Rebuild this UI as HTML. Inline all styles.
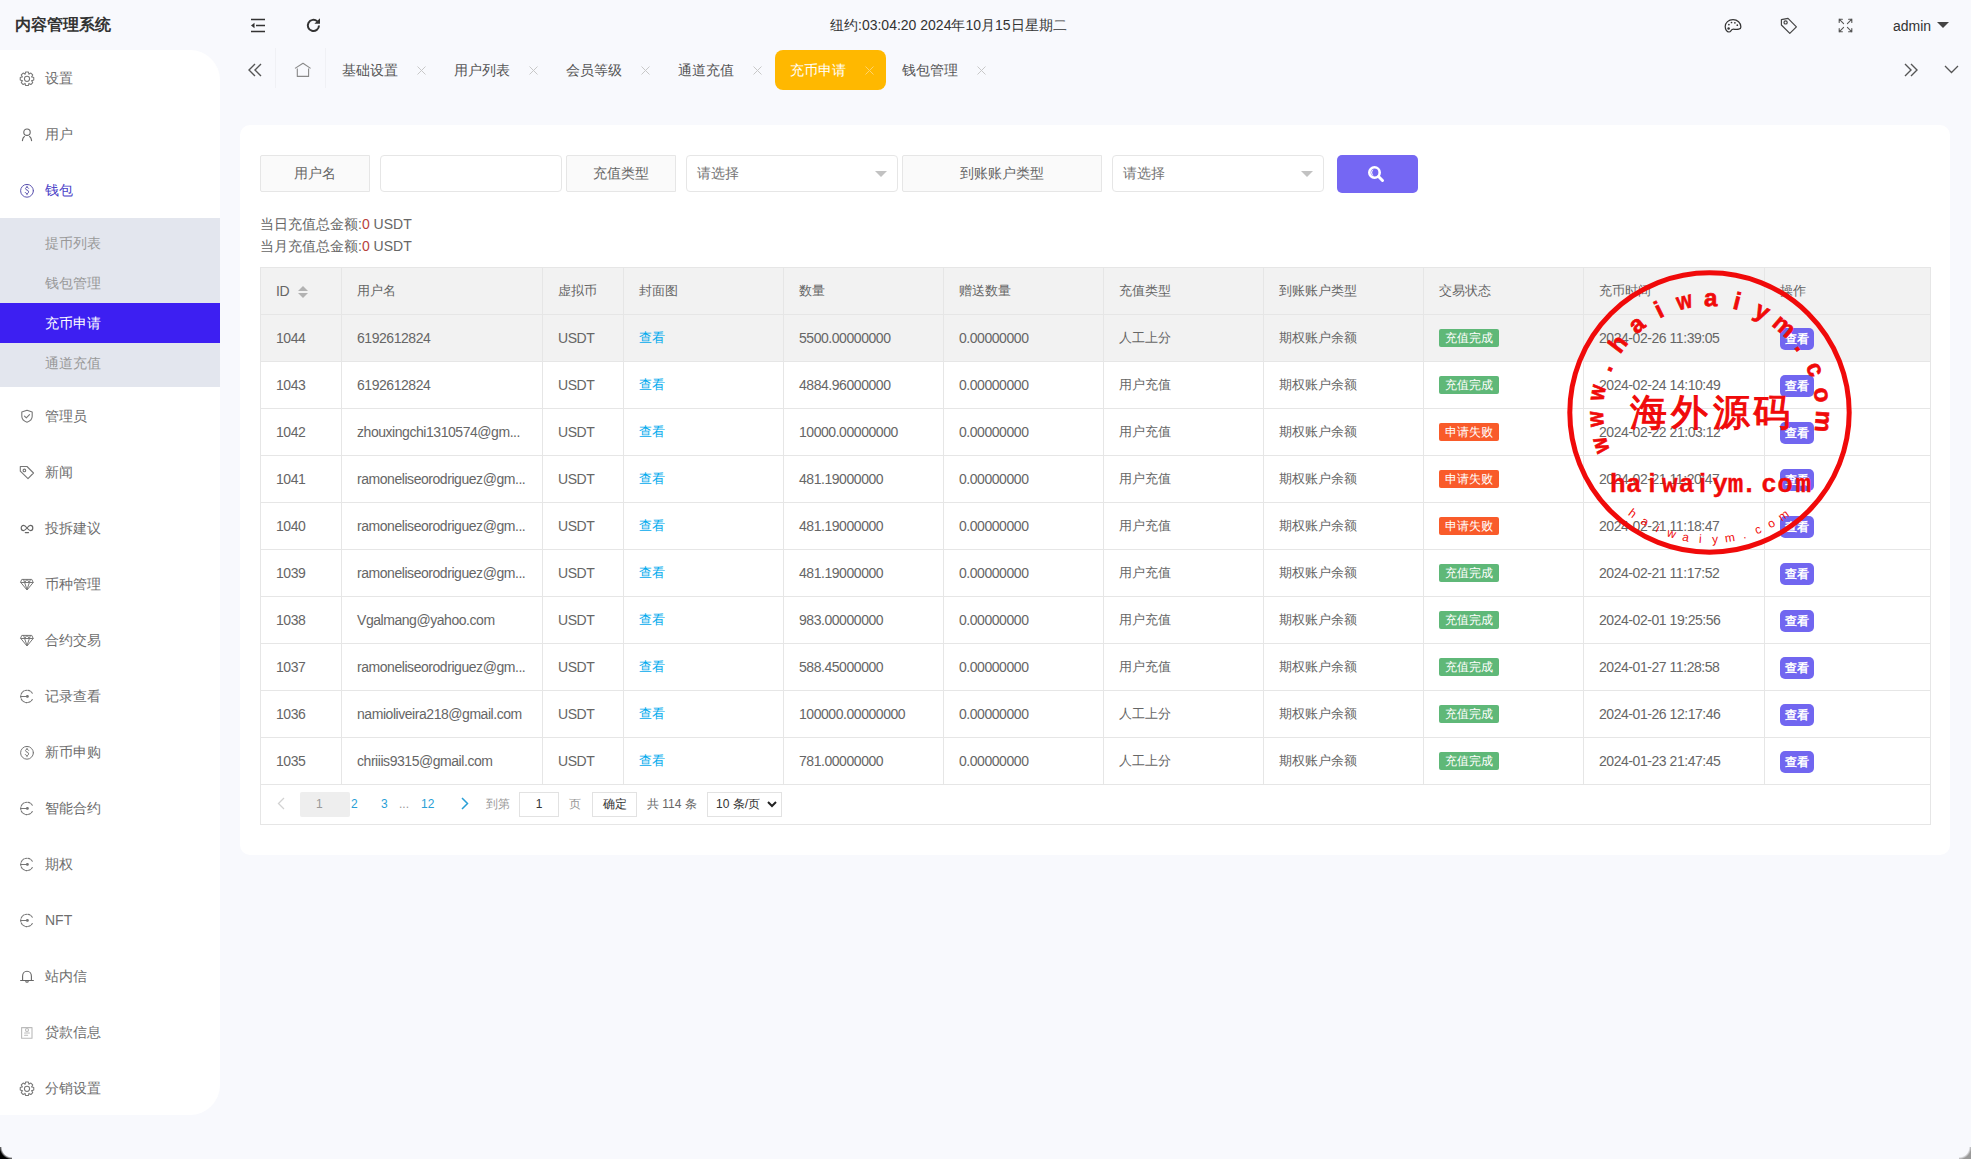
<!DOCTYPE html><html><head><meta charset="utf-8"><style>
*{box-sizing:border-box;margin:0;padding:0}
html,body{width:1971px;height:1159px;overflow:hidden}
body{background:#f8f9fd;font-family:"Liberation Sans",sans-serif;font-size:14px;color:#666;position:relative}
.abs{position:absolute}
.title{left:15px;top:13px;font-size:16px;font-weight:bold;color:#333;line-height:24px;letter-spacing:0px}
.side{left:0;top:50px;width:220px;height:1065px;background:#fff;border-radius:0 30px 30px 0}
.mi{position:absolute;left:0;width:220px;height:40px;line-height:40px}

.mi span{position:absolute;left:45px;top:0}
.sub{left:0;top:218px;width:220px;height:169px;background:#e3e6ee}
.si{position:absolute;left:0;width:220px;height:40px;line-height:40px;color:#999}
.si span{position:absolute;left:45px}
.si.act{background:#3d1ff2;color:#fff}
.tab{position:absolute;top:50px;height:40px;line-height:40px;color:#555}
.tab .x{position:absolute;top:0;color:#c2c2c2;font-size:14px}
.card{left:240px;top:125px;width:1710px;height:730px;background:#fff;border-radius:10px}
.lab{position:absolute;top:155px;height:37px;line-height:35px;background:#fafafa;border:1px solid #e6e6e6;text-align:center;color:#666;border-radius:2px 0 0 2px}
.inp{position:absolute;top:155px;height:37px;line-height:35px;background:#fff;border:1px solid #e6e6e6;border-radius:4px;color:#757575;padding-left:10px}
.tri{position:absolute;width:0;height:0;border-left:6px solid transparent;border-right:6px solid transparent;border-top:6px solid #c2c2c2}
table{border-collapse:collapse;table-layout:fixed;width:1671px}
.tbl{position:absolute;left:260px;top:267px}
td,th{border:1px solid #e6e6e6;height:47px;padding:0 15px;font-weight:normal;text-align:left;white-space:nowrap;overflow:hidden;color:#666;font-size:13px}
.n{font-size:14px;letter-spacing:-0.45px}
th{background:#f2f2f2}
tr.hov td{background:#f2f2f2}
.lnk{color:#01aaed}
.bdg{letter-spacing:0;display:inline-block;width:60px;height:18px;line-height:18px;font-size:12px;color:#fff;text-align:center;border-radius:2px;vertical-align:middle}
.ok{background:#5fb878}
.fail{background:#f95b2a}
.vbtn{letter-spacing:0;display:inline-block;width:34px;height:22px;line-height:22px;font-size:12px;font-weight:bold;color:#fff;text-align:center;border-radius:5px;background:#7166f0;vertical-align:middle;position:relative;top:1px;margin-left:0}
</style></head><body>

<div class="abs title">内容管理系统</div>
<svg class="abs" style="left:250px;top:18px" width="16" height="15" viewBox="0 0 16 15"><path fill="none" stroke="#333" stroke-width="1.6" d="M1 1.5h14M6 7.5h9M1 13.5h14"/><path fill="#333" d="M4.5 4.8L1 7.5l3.5 2.7z"/></svg>
<svg class="abs" style="left:305px;top:17px" width="17" height="17" viewBox="0 0 17 17"><path fill="none" stroke="#333" stroke-width="2" d="M14 8.5A5.6 5.6 0 1 1 12.3 4.4"/><path fill="#333" d="M15 1.2v5.6h-5.6z"/></svg>
<div class="abs" style="left:830px;top:15px;line-height:20px;color:#333;font-size:14px">纽约:03:04:20 2024年10月15日星期二</div>
<svg class="abs" style="left:1724px;top:18px" width="18" height="16" viewBox="0 0 18 16"><path fill="none" stroke="#333" stroke-width="1.2" stroke-linejoin="round" d="M9 1.6C4.6 1.6 1.2 4.6 1.2 8.6c0 2.9 1.7 5.4 3.8 5.4 1.7 0 2-1.8 3.1-2.5 1.3-0.8 3.7 0.3 6.6-0.3 1.4-0.3 2.2-1 2.2-2.3C16.9 4.8 13.4 1.6 9 1.6z"/><circle fill="#333" cx="4.6" cy="10.6" r="1.25"/><circle fill="#333" cx="4.9" cy="6.6" r="0.85"/><circle fill="#333" cx="7.5" cy="4.5" r="0.85"/><circle fill="#333" cx="10.9" cy="4.8" r="0.85"/><circle fill="#333" cx="13.3" cy="7.2" r="0.85"/></svg>
<svg class="abs" style="left:1780px;top:17px" width="18" height="18" viewBox="0 0 18 18"><path fill="none" stroke="#444" stroke-width="1.2" stroke-linejoin="round" d="M1.4 2.6L8 1.4l8.4 8.4-6.6 6.6L1.4 8z"/><circle fill="none" stroke="#444" stroke-width="1.2" cx="5.6" cy="5.4" r="1.6"/></svg>
<svg class="abs" style="left:1838px;top:18px" width="15" height="15" viewBox="0 0 15 15"><g fill="none" stroke="#555" stroke-width="1.1" stroke-linecap="round"><path d="M5.6 5.6L1.2 1.2M1.2 4.4V1.2h3.2M9.4 5.6l4.4-4.4M10.6 1.2h3.2v3.2M5.6 9.4L1.2 13.8M1.2 10.6v3.2h3.2M9.4 9.4l4.4 4.4M13.8 10.6v3.2h-3.2"/></g></svg>
<div class="abs" style="left:1893px;top:16px;line-height:20px;color:#333;font-size:14px">admin</div>
<div class="tri abs" style="left:1937px;top:22px;border-top-color:#444;border-left-width:6px;border-right-width:6px;border-top-width:6px"></div>
<div class="abs side"></div>
<div class="mi" style="top:58px;color:#6e6e6e"><svg width="16" height="16" viewBox="0 0 16 16" style="position:absolute;left:19px;top:12px"><g fill="none" stroke="#777" stroke-width="1.05" stroke-linecap="round" stroke-linejoin="round"><path d="M5.97 4.23 L6.68 2.03 L9.32 2.03 L10.03 4.23 L9.79 4.13 L11.86 3.08 L13.72 4.94 L12.67 7.01 L12.57 6.77 L14.77 7.48 L14.77 10.12 L12.57 10.83 L12.67 10.59 L13.72 12.66 L11.86 14.52 L9.79 13.47 L10.03 13.37 L9.32 15.57 L6.68 15.57 L5.97 13.37 L6.21 13.47 L4.14 14.52 L2.28 12.66 L3.33 10.59 L3.43 10.83 L1.23 10.12 L1.23 7.48 L3.43 6.77 L3.33 7.01 L2.28 4.94 L4.14 3.08 L6.21 4.13Z"/><circle cx="8" cy="8.8" r="2.6"/></g></svg><span>设置</span></div>
<div class="mi" style="top:114px;color:#6e6e6e"><svg width="16" height="16" viewBox="0 0 16 16" style="position:absolute;left:19px;top:12px"><g fill="none" stroke="#666" stroke-width="1.1" stroke-linecap="round" stroke-linejoin="round"><circle cx="8" cy="6.2" r="3.2"/><path d="M3.4 14.6C3.6 12.6 4.3 11.2 5.4 10.5M10.6 10.5C11.7 11.2 12.4 12.6 12.6 14.6"/></g></svg><span>用户</span></div>
<div class="mi" style="top:170px;color:#4b3fc8"><svg width="16" height="16" viewBox="0 0 16 16" style="position:absolute;left:19px;top:12px"><g fill="none" stroke="#5d55b0" stroke-width="1.0" stroke-linecap="round" stroke-linejoin="round"><circle cx="8" cy="8.8" r="6.4"/><path d="M9.6 6.3C9.3 5.6 8.8 5.3 8 5.3 7 5.3 6.5 5.9 6.5 6.6 6.5 8.4 9.6 7.6 9.6 9.9 9.6 10.8 8.9 11.5 8 11.5 7.1 11.5 6.6 11.1 6.3 10.4M8 4.2v1.1M8 11.5v1.2"/></g></svg><span>钱包</span></div>
<div class="mi" style="top:396px;color:#6e6e6e"><svg width="16" height="16" viewBox="0 0 16 16" style="position:absolute;left:19px;top:12px"><g fill="none" stroke="#777" stroke-width="1.1" stroke-linecap="round" stroke-linejoin="round"><path d="M8 2.2l5.2 1.9v4.2c0 3-2.3 5-5.2 5.9-2.9-0.9-5.2-2.9-5.2-5.9V4.1z"/><path d="M5.5 8.2l1.8 1.7 3.2-3.2"/></g></svg><span>管理员</span></div>
<div class="mi" style="top:452px;color:#6e6e6e"><svg width="16" height="16" viewBox="0 0 16 16" style="position:absolute;left:19px;top:12px"><g fill="none" stroke="#777" stroke-width="1.1" stroke-linecap="round" stroke-linejoin="round"><path d="M1.3 2.5H8L14.5 9 9 14.6 1.3 7.2Z"/><circle cx="5.4" cy="6.4" r="1.3"/></g></svg><span>新闻</span></div>
<div class="mi" style="top:508px;color:#6e6e6e"><svg width="16" height="16" viewBox="0 0 16 16" style="position:absolute;left:19px;top:12px"><g fill="none" stroke="#666" stroke-width="1.2" stroke-linecap="round" stroke-linejoin="round"><path d="M8 8C6.8 6.5 5.8 5.4 4.6 5.4 3.2 5.4 2.2 6.6 2.2 8S3.2 10.6 4.6 10.6C5.8 10.6 6.8 9.5 8 8S10.2 5.4 11.4 5.4C12.8 5.4 13.8 6.6 13.8 8S12.8 10.6 11.4 10.6C10.2 10.6 9.2 9.5 8 8Z"/><path d="M6.3 12.6h3.2"/></g></svg><span>投拆建议</span></div>
<div class="mi" style="top:564px;color:#6e6e6e"><svg width="16" height="16" viewBox="0 0 16 16" style="position:absolute;left:19px;top:12px"><g fill="none" stroke="#777" stroke-width="1.0" stroke-linecap="round" stroke-linejoin="round"><path d="M3.2 3.4h9.6L14.2 6.5 8 14 1.8 6.5Z"/><path d="M2 6.5h12M4.6 3.4l1 3.1L8 13.6 10.4 6.5l1-3.1M5.6 6.5L8 3.4l2.4 3.1"/></g></svg><span>币种管理</span></div>
<div class="mi" style="top:620px;color:#6e6e6e"><svg width="16" height="16" viewBox="0 0 16 16" style="position:absolute;left:19px;top:12px"><g fill="none" stroke="#777" stroke-width="1.0" stroke-linecap="round" stroke-linejoin="round"><path d="M3.2 3.4h9.6L14.2 6.5 8 14 1.8 6.5Z"/><path d="M2 6.5h12M4.6 3.4l1 3.1L8 13.6 10.4 6.5l1-3.1M5.6 6.5L8 3.4l2.4 3.1"/></g></svg><span>合约交易</span></div>
<div class="mi" style="top:676px;color:#6e6e6e"><svg width="16" height="16" viewBox="0 0 16 16" style="position:absolute;left:19px;top:12px"><g fill="none" stroke="#777" stroke-width="1.05" stroke-linecap="round" stroke-linejoin="round"><path stroke-dasharray="1.9 1.1" d="M13.3 5.3A6.2 6.2 0 1 0 13.3 11.5"/><path d="M1.6 8.4h6.4"/><circle cx="8.4" cy="8.4" r="0.9" fill="#777"/></g></svg><span>记录查看</span></div>
<div class="mi" style="top:732px;color:#6e6e6e"><svg width="16" height="16" viewBox="0 0 16 16" style="position:absolute;left:19px;top:12px"><g fill="none" stroke="#777" stroke-width="1.0" stroke-linecap="round" stroke-linejoin="round"><circle cx="8" cy="8.8" r="6.4"/><path d="M9.6 6.3C9.3 5.6 8.8 5.3 8 5.3 7 5.3 6.5 5.9 6.5 6.6 6.5 8.4 9.6 7.6 9.6 9.9 9.6 10.8 8.9 11.5 8 11.5 7.1 11.5 6.6 11.1 6.3 10.4M8 4.2v1.1M8 11.5v1.2"/></g></svg><span>新币申购</span></div>
<div class="mi" style="top:788px;color:#6e6e6e"><svg width="16" height="16" viewBox="0 0 16 16" style="position:absolute;left:19px;top:12px"><g fill="none" stroke="#777" stroke-width="1.05" stroke-linecap="round" stroke-linejoin="round"><path stroke-dasharray="1.9 1.1" d="M13.3 5.3A6.2 6.2 0 1 0 13.3 11.5"/><path d="M1.6 8.4h6.4"/><circle cx="8.4" cy="8.4" r="0.9" fill="#777"/></g></svg><span>智能合约</span></div>
<div class="mi" style="top:844px;color:#6e6e6e"><svg width="16" height="16" viewBox="0 0 16 16" style="position:absolute;left:19px;top:12px"><g fill="none" stroke="#777" stroke-width="1.05" stroke-linecap="round" stroke-linejoin="round"><path stroke-dasharray="1.9 1.1" d="M13.3 5.3A6.2 6.2 0 1 0 13.3 11.5"/><path d="M1.6 8.4h6.4"/><circle cx="8.4" cy="8.4" r="0.9" fill="#777"/></g></svg><span>期权</span></div>
<div class="mi" style="top:900px;color:#6e6e6e"><svg width="16" height="16" viewBox="0 0 16 16" style="position:absolute;left:19px;top:12px"><g fill="none" stroke="#777" stroke-width="1.05" stroke-linecap="round" stroke-linejoin="round"><path stroke-dasharray="1.9 1.1" d="M13.3 5.3A6.2 6.2 0 1 0 13.3 11.5"/><path d="M1.6 8.4h6.4"/><circle cx="8.4" cy="8.4" r="0.9" fill="#777"/></g></svg><span>NFT</span></div>
<div class="mi" style="top:956px;color:#6e6e6e"><svg width="16" height="16" viewBox="0 0 16 16" style="position:absolute;left:19px;top:12px"><g fill="none" stroke="#666" stroke-width="1.1" stroke-linecap="round" stroke-linejoin="round"><path d="M3.6 12.5V8.2C3.6 5.3 5.5 3.2 8 3.2S12.4 5.3 12.4 8.2V12.5M1.6 12.5H14.4M6.8 12.6v0.6a1.2 1 0 0 0 2.4 0v-0.6"/></g></svg><span>站内信</span></div>
<div class="mi" style="top:1012px;color:#6e6e6e"><svg width="16" height="16" viewBox="0 0 16 16" style="position:absolute;left:19px;top:12px"><g fill="none" stroke="#bbb" stroke-width="1.1" stroke-linecap="round" stroke-linejoin="round"><path d="M2.6 3.6h10.4v10.6H2.6z"/><circle cx="8" cy="6" r="1.5"/><path d="M5.6 9h4.8M5.6 11.3h3"/></g></svg><span>贷款信息</span></div>
<div class="mi" style="top:1068px;color:#6e6e6e"><svg width="16" height="16" viewBox="0 0 16 16" style="position:absolute;left:19px;top:12px"><g fill="none" stroke="#777" stroke-width="1.05" stroke-linecap="round" stroke-linejoin="round"><path d="M5.97 4.23 L6.68 2.03 L9.32 2.03 L10.03 4.23 L9.79 4.13 L11.86 3.08 L13.72 4.94 L12.67 7.01 L12.57 6.77 L14.77 7.48 L14.77 10.12 L12.57 10.83 L12.67 10.59 L13.72 12.66 L11.86 14.52 L9.79 13.47 L10.03 13.37 L9.32 15.57 L6.68 15.57 L5.97 13.37 L6.21 13.47 L4.14 14.52 L2.28 12.66 L3.33 10.59 L3.43 10.83 L1.23 10.12 L1.23 7.48 L3.43 6.77 L3.33 7.01 L2.28 4.94 L4.14 3.08 L6.21 4.13Z"/><circle cx="8" cy="8.8" r="2.6"/></g></svg><span>分销设置</span></div>
<div class="abs sub">
<div class="si" style="top:5px"><span>提币列表</span></div>
<div class="si" style="top:45px"><span>钱包管理</span></div>
<div class="si act" style="top:85px"><span>充币申请</span></div>
<div class="si" style="top:125px"><span>通道充值</span></div>
</div>
<svg class="abs" style="left:248px;top:63px" width="14" height="14" viewBox="0 0 14 14"><path fill="none" stroke="#555" stroke-width="1.4" d="M7 1L1 7l6 6M13 1L7 7l6 6"/></svg>
<svg class="abs" style="left:294px;top:62px" width="18" height="16" viewBox="0 0 18 16"><path fill="none" stroke="#888" stroke-width="1.1" stroke-linejoin="round" d="M1 6.4L9 1.3 16.6 6.4M3.3 6.4V14.4H14.6V6.4"/></svg>
<div class="abs" style="left:275px;top:48px;width:1px;height:40px;background:#f0f1f5"></div>
<div class="abs" style="left:325px;top:48px;width:1px;height:40px;background:#f0f1f5"></div>
<div class="abs" style="left:775px;top:50px;width:111px;height:40px;background:#ffb800;border-radius:8px"></div>
<div class="tab" style="left:342px;">基础设置</div>
<svg class="abs" style="left:417px;top:66px" width="9" height="9" viewBox="0 0 9 9"><path fill="none" stroke="#c8c8c8" stroke-width="1" d="M0.5 0.5l8 8M8.5 0.5l-8 8"/></svg>
<div class="tab" style="left:454px;">用户列表</div>
<svg class="abs" style="left:529px;top:66px" width="9" height="9" viewBox="0 0 9 9"><path fill="none" stroke="#c8c8c8" stroke-width="1" d="M0.5 0.5l8 8M8.5 0.5l-8 8"/></svg>
<div class="tab" style="left:566px;">会员等级</div>
<svg class="abs" style="left:641px;top:66px" width="9" height="9" viewBox="0 0 9 9"><path fill="none" stroke="#c8c8c8" stroke-width="1" d="M0.5 0.5l8 8M8.5 0.5l-8 8"/></svg>
<div class="tab" style="left:678px;">通道充值</div>
<svg class="abs" style="left:753px;top:66px" width="9" height="9" viewBox="0 0 9 9"><path fill="none" stroke="#c8c8c8" stroke-width="1" d="M0.5 0.5l8 8M8.5 0.5l-8 8"/></svg>
<div class="tab" style="left:790px;color:#fff">充币申请</div>
<svg class="abs" style="left:865px;top:66px" width="9" height="9" viewBox="0 0 9 9"><path fill="none" stroke="#ffd36b" stroke-width="1" d="M0.5 0.5l8 8M8.5 0.5l-8 8"/></svg>
<div class="tab" style="left:902px;">钱包管理</div>
<svg class="abs" style="left:977px;top:66px" width="9" height="9" viewBox="0 0 9 9"><path fill="none" stroke="#c8c8c8" stroke-width="1" d="M0.5 0.5l8 8M8.5 0.5l-8 8"/></svg>
<svg class="abs" style="left:1904px;top:63px" width="14" height="14" viewBox="0 0 14 14"><path fill="none" stroke="#555" stroke-width="1.4" d="M1 1l6 6-6 6M7 1l6 6-6 6"/></svg>
<svg class="abs" style="left:1944px;top:65px" width="15" height="9" viewBox="0 0 15 9"><path fill="none" stroke="#555" stroke-width="1.3" d="M1 1l6.5 6.5L14 1"/></svg>
<div class="abs card"></div>
<div class="lab" style="left:260px;width:110px">用户名</div>
<div class="inp" style="left:380px;width:182px"></div>
<div class="lab" style="left:566px;width:110px">充值类型</div>
<div class="inp" style="left:686px;width:212px">请选择</div><div class="tri" style="left:875px;top:171px"></div>
<div class="lab" style="left:902px;width:200px">到账账户类型</div>
<div class="inp" style="left:1112px;width:212px">请选择</div><div class="tri" style="left:1301px;top:171px"></div>
<div class="abs" style="left:1337px;top:155px;width:81px;height:38px;background:#7567f3;border-radius:5px"></div>
<svg class="abs" style="left:1367px;top:165px" width="18" height="18" viewBox="0 0 18 18"><circle fill="none" stroke="#fff" stroke-width="2.6" cx="7.5" cy="7.5" r="5.2"/><path stroke="#fff" stroke-width="3" stroke-linecap="round" d="M11.5 11.5l4 4"/><path fill="#fff" d="M6.6 4.2A3.4 3.4 0 0 0 6.6 10.8 5 5 0 0 1 6.6 4.2z"/></svg>
<div class="abs" style="left:260px;top:214px;line-height:20px;font-size:14px;color:#666">当日充值总金额:<span style="color:#b8423c">0</span> USDT</div>
<div class="abs" style="left:260px;top:236px;line-height:20px;font-size:14px;color:#666">当月充值总金额:<span style="color:#b8423c">0</span> USDT</div>
<table class="tbl"><colgroup>
<col style="width:81px">
<col style="width:201px">
<col style="width:81px">
<col style="width:160px">
<col style="width:160px">
<col style="width:160px">
<col style="width:160px">
<col style="width:160px">
<col style="width:160px">
<col style="width:181px">
<col style="width:166px">
</colgroup><tr>
<th class="n">ID <span style="display:inline-block;position:relative;width:10px;height:12px;vertical-align:middle;margin-left:5px"><i style="position:absolute;left:0;top:0;border:5px solid transparent;border-bottom-color:#b2b2b2;border-top-width:0"></i><i style="position:absolute;left:0;top:7px;border:5px solid transparent;border-top-color:#b2b2b2;border-bottom-width:0"></i></span></th>
<th>用户名</th>
<th>虚拟币</th>
<th>封面图</th>
<th>数量</th>
<th>赠送数量</th>
<th>充值类型</th>
<th>到账账户类型</th>
<th>交易状态</th>
<th>充币时间</th>
<th>操作</th>
</tr>
<tr class="hov"><td class="n">1044</td><td class="n">6192612824</td><td class="n">USDT</td><td><span class="lnk">查看</span></td><td class="n">5500.00000000</td><td class="n">0.00000000</td><td>人工上分</td><td>期权账户余额</td><td><span class="bdg ok">充值完成</span></td><td class="n">2024-02-26 11:39:05</td><td><span class="vbtn">查看</span></td></tr>
<tr><td class="n">1043</td><td class="n">6192612824</td><td class="n">USDT</td><td><span class="lnk">查看</span></td><td class="n">4884.96000000</td><td class="n">0.00000000</td><td>用户充值</td><td>期权账户余额</td><td><span class="bdg ok">充值完成</span></td><td class="n">2024-02-24 14:10:49</td><td><span class="vbtn">查看</span></td></tr>
<tr><td class="n">1042</td><td class="n">zhouxingchi1310574@gm...</td><td class="n">USDT</td><td><span class="lnk">查看</span></td><td class="n">10000.00000000</td><td class="n">0.00000000</td><td>用户充值</td><td>期权账户余额</td><td><span class="bdg fail">申请失败</span></td><td class="n">2024-02-22 21:03:12</td><td><span class="vbtn">查看</span></td></tr>
<tr><td class="n">1041</td><td class="n">ramoneliseorodriguez@gm...</td><td class="n">USDT</td><td><span class="lnk">查看</span></td><td class="n">481.19000000</td><td class="n">0.00000000</td><td>用户充值</td><td>期权账户余额</td><td><span class="bdg fail">申请失败</span></td><td class="n">2024-02-21 11:20:47</td><td><span class="vbtn">查看</span></td></tr>
<tr><td class="n">1040</td><td class="n">ramoneliseorodriguez@gm...</td><td class="n">USDT</td><td><span class="lnk">查看</span></td><td class="n">481.19000000</td><td class="n">0.00000000</td><td>用户充值</td><td>期权账户余额</td><td><span class="bdg fail">申请失败</span></td><td class="n">2024-02-21 11:18:47</td><td><span class="vbtn">查看</span></td></tr>
<tr><td class="n">1039</td><td class="n">ramoneliseorodriguez@gm...</td><td class="n">USDT</td><td><span class="lnk">查看</span></td><td class="n">481.19000000</td><td class="n">0.00000000</td><td>用户充值</td><td>期权账户余额</td><td><span class="bdg ok">充值完成</span></td><td class="n">2024-02-21 11:17:52</td><td><span class="vbtn">查看</span></td></tr>
<tr><td class="n">1038</td><td class="n">Vgalmang@yahoo.com</td><td class="n">USDT</td><td><span class="lnk">查看</span></td><td class="n">983.00000000</td><td class="n">0.00000000</td><td>用户充值</td><td>期权账户余额</td><td><span class="bdg ok">充值完成</span></td><td class="n">2024-02-01 19:25:56</td><td><span class="vbtn">查看</span></td></tr>
<tr><td class="n">1037</td><td class="n">ramoneliseorodriguez@gm...</td><td class="n">USDT</td><td><span class="lnk">查看</span></td><td class="n">588.45000000</td><td class="n">0.00000000</td><td>用户充值</td><td>期权账户余额</td><td><span class="bdg ok">充值完成</span></td><td class="n">2024-01-27 11:28:58</td><td><span class="vbtn">查看</span></td></tr>
<tr><td class="n">1036</td><td class="n">namioliveira218@gmail.com</td><td class="n">USDT</td><td><span class="lnk">查看</span></td><td class="n">100000.00000000</td><td class="n">0.00000000</td><td>人工上分</td><td>期权账户余额</td><td><span class="bdg ok">充值完成</span></td><td class="n">2024-01-26 12:17:46</td><td><span class="vbtn">查看</span></td></tr>
<tr><td class="n">1035</td><td class="n">chriiis9315@gmail.com</td><td class="n">USDT</td><td><span class="lnk">查看</span></td><td class="n">781.00000000</td><td class="n">0.00000000</td><td>人工上分</td><td>期权账户余额</td><td><span class="bdg ok">充值完成</span></td><td class="n">2024-01-23 21:47:45</td><td><span class="vbtn">查看</span></td></tr>
<tr><td colspan="11" style="height:40px;padding:0"></td></tr>
</table>
<div class="abs" style="left:260px;top:784px;width:1670px;height:40px;font-size:12px">
<svg class="abs" style="left:17px;top:13px" width="8" height="13" viewBox="0 0 8 13"><path fill="none" stroke="#d2d2d2" stroke-width="1.3" d="M7 1L1.5 6.5 7 12"/></svg>
<div class="abs" style="left:40px;top:8px;width:50px;height:25px;background:#eee;border-radius:2px;line-height:25px;padding-left:16px;color:#999">1</div>
<div class="abs" style="left:91px;top:8px;line-height:25px;color:#2a9fd6">2</div>
<div class="abs" style="left:121px;top:8px;line-height:25px;color:#2a9fd6">3</div>
<div class="abs" style="left:139px;top:8px;line-height:25px;color:#999">...</div>
<div class="abs" style="left:161px;top:8px;line-height:25px;color:#2a9fd6">12</div>
<svg class="abs" style="left:201px;top:13px" width="8" height="13" viewBox="0 0 8 13"><path fill="none" stroke="#2a9fd6" stroke-width="1.5" d="M1 1l5.5 5.5L1 12"/></svg>
<div class="abs" style="left:226px;top:8px;line-height:25px;color:#999">到第</div>
<div class="abs" style="left:259px;top:8px;width:40px;height:25px;border:1px solid #e2e2e2;line-height:23px;text-align:center;color:#333;background:#fff">1</div>
<div class="abs" style="left:309px;top:8px;line-height:25px;color:#999">页</div>
<div class="abs" style="left:332px;top:8px;width:45px;height:25px;border:1px solid #e2e2e2;line-height:23px;text-align:center;color:#333;background:#fff">确定</div>
<div class="abs" style="left:387px;top:8px;line-height:25px;color:#666">共 114 条</div>
<div class="abs" style="left:447px;top:8px;width:75px;height:25px;border:1px solid #e2e2e2;line-height:23px;padding-left:8px;color:#333;background:#fff">10 条/页</div>
<svg class="abs" style="left:507px;top:17px" width="10" height="7" viewBox="0 0 10 7"><path fill="none" stroke="#222" stroke-width="2" d="M1 1l4 4 4-4"/></svg>
</div>
<div class="abs" style="left:0;top:1147px;width:12px;height:12px;background:radial-gradient(circle at 100% 0,rgba(0,0,0,0) 10px,#000 12.5px)"></div>
<div class="abs" style="left:1959px;top:1147px;width:12px;height:12px;background:radial-gradient(circle at 0 0,rgba(0,0,0,0) 10px,#999 12.5px)"></div>
<svg class="abs" style="left:1567px;top:270px;overflow:visible" width="285" height="290" viewBox="0 0 285 290">
<circle cx="142.5" cy="142.5" r="139.7" fill="none" stroke="#f00a0a" stroke-width="5"/>
<text x="0" y="0" transform="rotate(-106.76 142.5 142.5) translate(142.5 36.0) scale(0.82 1)" text-anchor="middle" font-family="Liberation Sans" font-weight="bold" font-size="24" fill="#f00a0a" stroke="#f00a0a" stroke-width="0.7">w</text>
<text x="0" y="0" transform="rotate(-93.34 142.5 142.5) translate(142.5 36.0) scale(0.82 1)" text-anchor="middle" font-family="Liberation Sans" font-weight="bold" font-size="24" fill="#f00a0a" stroke="#f00a0a" stroke-width="0.7">w</text>
<text x="0" y="0" transform="rotate(-79.92 142.5 142.5) translate(142.5 36.0) scale(0.82 1)" text-anchor="middle" font-family="Liberation Sans" font-weight="bold" font-size="24" fill="#f00a0a" stroke="#f00a0a" stroke-width="0.7">w</text>
<text x="0" y="0" transform="rotate(-66.50 142.5 142.5) translate(142.5 36.0) scale(1.0 1)" text-anchor="middle" font-family="Liberation Sans" font-weight="bold" font-size="24" fill="#f00a0a" stroke="#f00a0a" stroke-width="0.7">.</text>
<text x="0" y="0" transform="rotate(-53.08 142.5 142.5) translate(142.5 36.0) scale(1.0 1)" text-anchor="middle" font-family="Liberation Sans" font-weight="bold" font-size="24" fill="#f00a0a" stroke="#f00a0a" stroke-width="0.7">h</text>
<text x="0" y="0" transform="rotate(-39.66 142.5 142.5) translate(142.5 36.0) scale(1.0 1)" text-anchor="middle" font-family="Liberation Sans" font-weight="bold" font-size="24" fill="#f00a0a" stroke="#f00a0a" stroke-width="0.7">a</text>
<text x="0" y="0" transform="rotate(-26.24 142.5 142.5) translate(142.5 36.0) scale(1.0 1)" text-anchor="middle" font-family="Liberation Sans" font-weight="bold" font-size="24" fill="#f00a0a" stroke="#f00a0a" stroke-width="0.7">i</text>
<text x="0" y="0" transform="rotate(-12.82 142.5 142.5) translate(142.5 36.0) scale(0.82 1)" text-anchor="middle" font-family="Liberation Sans" font-weight="bold" font-size="24" fill="#f00a0a" stroke="#f00a0a" stroke-width="0.7">w</text>
<text x="0" y="0" transform="rotate(0.60 142.5 142.5) translate(142.5 36.0) scale(1.0 1)" text-anchor="middle" font-family="Liberation Sans" font-weight="bold" font-size="24" fill="#f00a0a" stroke="#f00a0a" stroke-width="0.7">a</text>
<text x="0" y="0" transform="rotate(14.02 142.5 142.5) translate(142.5 36.0) scale(1.0 1)" text-anchor="middle" font-family="Liberation Sans" font-weight="bold" font-size="24" fill="#f00a0a" stroke="#f00a0a" stroke-width="0.7">i</text>
<text x="0" y="0" transform="rotate(27.44 142.5 142.5) translate(142.5 36.0) scale(1.0 1)" text-anchor="middle" font-family="Liberation Sans" font-weight="bold" font-size="24" fill="#f00a0a" stroke="#f00a0a" stroke-width="0.7">y</text>
<text x="0" y="0" transform="rotate(40.86 142.5 142.5) translate(142.5 36.0) scale(1.0 1)" text-anchor="middle" font-family="Liberation Sans" font-weight="bold" font-size="24" fill="#f00a0a" stroke="#f00a0a" stroke-width="0.7">m</text>
<text x="0" y="0" transform="rotate(54.28 142.5 142.5) translate(142.5 36.0) scale(1.0 1)" text-anchor="middle" font-family="Liberation Sans" font-weight="bold" font-size="24" fill="#f00a0a" stroke="#f00a0a" stroke-width="0.7">.</text>
<text x="0" y="0" transform="rotate(67.70 142.5 142.5) translate(142.5 36.0) scale(1.0 1)" text-anchor="middle" font-family="Liberation Sans" font-weight="bold" font-size="24" fill="#f00a0a" stroke="#f00a0a" stroke-width="0.7">c</text>
<text x="0" y="0" transform="rotate(81.12 142.5 142.5) translate(142.5 36.0) scale(1.0 1)" text-anchor="middle" font-family="Liberation Sans" font-weight="bold" font-size="24" fill="#f00a0a" stroke="#f00a0a" stroke-width="0.7">o</text>
<text x="0" y="0" transform="rotate(94.54 142.5 142.5) translate(142.5 36.0) scale(1.0 1)" text-anchor="middle" font-family="Liberation Sans" font-weight="bold" font-size="24" fill="#f00a0a" stroke="#f00a0a" stroke-width="0.7">m</text>
<text x="142.5" y="273.3" transform="rotate(37.30 142.5 142.5)" text-anchor="middle" font-family="Liberation Sans" font-size="12" fill="#f00a0a">h</text>
<text x="142.5" y="273.3" transform="rotate(30.66 142.5 142.5)" text-anchor="middle" font-family="Liberation Sans" font-size="12" fill="#f00a0a">a</text>
<text x="142.5" y="273.3" transform="rotate(24.02 142.5 142.5)" text-anchor="middle" font-family="Liberation Sans" font-size="12" fill="#f00a0a">i</text>
<text x="142.5" y="273.3" transform="rotate(17.38 142.5 142.5)" text-anchor="middle" font-family="Liberation Sans" font-size="12" fill="#f00a0a">w</text>
<text x="142.5" y="273.3" transform="rotate(10.74 142.5 142.5)" text-anchor="middle" font-family="Liberation Sans" font-size="12" fill="#f00a0a">a</text>
<text x="142.5" y="273.3" transform="rotate(4.10 142.5 142.5)" text-anchor="middle" font-family="Liberation Sans" font-size="12" fill="#f00a0a">i</text>
<text x="142.5" y="273.3" transform="rotate(-2.54 142.5 142.5)" text-anchor="middle" font-family="Liberation Sans" font-size="12" fill="#f00a0a">y</text>
<text x="142.5" y="273.3" transform="rotate(-9.18 142.5 142.5)" text-anchor="middle" font-family="Liberation Sans" font-size="12" fill="#f00a0a">m</text>
<text x="142.5" y="273.3" transform="rotate(-15.82 142.5 142.5)" text-anchor="middle" font-family="Liberation Sans" font-size="12" fill="#f00a0a">.</text>
<text x="142.5" y="273.3" transform="rotate(-22.46 142.5 142.5)" text-anchor="middle" font-family="Liberation Sans" font-size="12" fill="#f00a0a">c</text>
<text x="142.5" y="273.3" transform="rotate(-29.10 142.5 142.5)" text-anchor="middle" font-family="Liberation Sans" font-size="12" fill="#f00a0a">o</text>
<text x="142.5" y="273.3" transform="rotate(-35.74 142.5 142.5)" text-anchor="middle" font-family="Liberation Sans" font-size="12" fill="#f00a0a">m</text>
<text x="50.9" y="221.8" text-anchor="middle" font-family="Liberation Mono" font-weight="bold" font-size="26" fill="#f00a0a" stroke="#f00a0a" stroke-width="0.3">h</text>
<text x="66.8" y="221.8" text-anchor="middle" font-family="Liberation Mono" font-weight="bold" font-size="26" fill="#f00a0a" stroke="#f00a0a" stroke-width="0.3">a</text>
<text x="84.9" y="221.8" text-anchor="middle" font-family="Liberation Sans" font-weight="bold" font-size="25" fill="#f00a0a" stroke="#f00a0a" stroke-width="0.3">i</text>
<text x="102.8" y="221.8" text-anchor="middle" font-family="Liberation Mono" font-weight="bold" font-size="26" fill="#f00a0a" stroke="#f00a0a" stroke-width="0.3">w</text>
<text x="119.5" y="221.8" text-anchor="middle" font-family="Liberation Mono" font-weight="bold" font-size="26" fill="#f00a0a" stroke="#f00a0a" stroke-width="0.3">a</text>
<text x="135.4" y="221.8" text-anchor="middle" font-family="Liberation Sans" font-weight="bold" font-size="25" fill="#f00a0a" stroke="#f00a0a" stroke-width="0.3">i</text>
<text x="153.0" y="221.8" text-anchor="middle" font-family="Liberation Mono" font-weight="bold" font-size="26" fill="#f00a0a" stroke="#f00a0a" stroke-width="0.3">y</text>
<text x="168.6" y="221.8" text-anchor="middle" font-family="Liberation Mono" font-weight="bold" font-size="26" fill="#f00a0a" stroke="#f00a0a" stroke-width="0.3">m</text>
<text x="182.0" y="221.8" text-anchor="middle" font-family="Liberation Mono" font-weight="bold" font-size="26" fill="#f00a0a" stroke="#f00a0a" stroke-width="0.3">.</text>
<text x="202.0" y="221.8" text-anchor="middle" font-family="Liberation Mono" font-weight="bold" font-size="26" fill="#f00a0a" stroke="#f00a0a" stroke-width="0.3">c</text>
<text x="218.0" y="221.8" text-anchor="middle" font-family="Liberation Mono" font-weight="bold" font-size="26" fill="#f00a0a" stroke="#f00a0a" stroke-width="0.3">o</text>
<text x="236.4" y="221.8" text-anchor="middle" font-family="Liberation Mono" font-weight="bold" font-size="26" fill="#f00a0a" stroke="#f00a0a" stroke-width="0.3">m</text>
<text x="81.4 122.4 164.2 204.4" y="155" text-anchor="middle" font-family="Liberation Serif, serif" font-weight="500" font-size="37" fill="#f00a0a" stroke="#f00a0a" stroke-width="1.1">海外源码</text>
</svg>
</body></html>
